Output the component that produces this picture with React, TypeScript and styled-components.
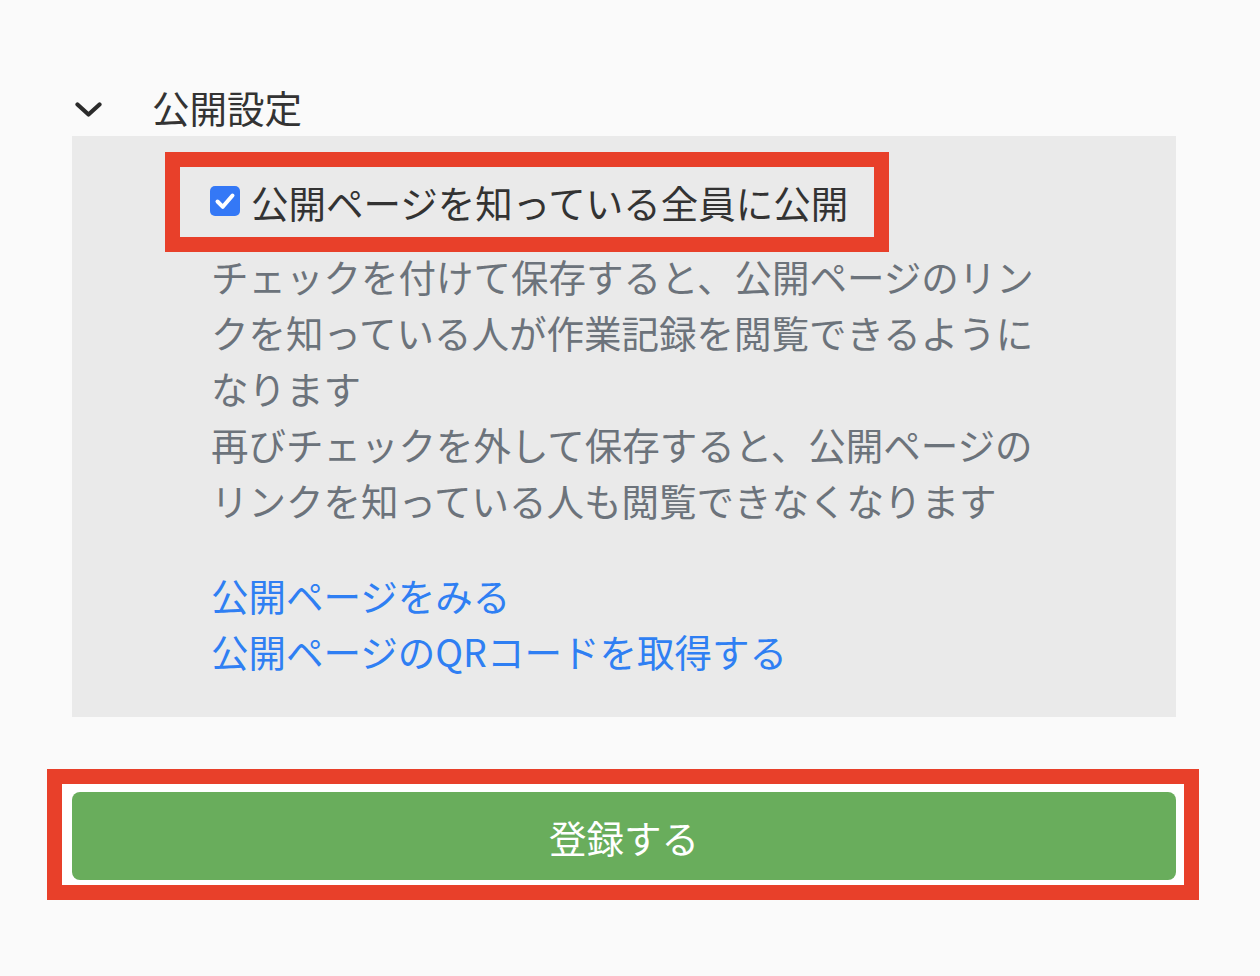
import { useState } from "react";
import styled, { createGlobalStyle } from "styled-components";

const GlobalStyle = createGlobalStyle`
  html, body {
    margin: 0;
    padding: 0;
    background: #fafafa;
  }
  body {
    font-family: "Noto Sans CJK JP", "Noto Sans", sans-serif;
    color: #333333;
  }
`;

const FONT_SIZE = "37.5px";

const App = () => {
  const [isPublic, setIsPublic] = useState(true);

  return (
    <>
      <GlobalStyle />
      <Page>
        <SectionHeader>
          <ChevronIcon viewBox="0 0 27 15" aria-hidden>
            <path
              d="M2.5 2.5 L13.5 12.5 L24.5 2.5"
              fill="none"
              stroke="#2b2b2b"
              strokeWidth="4.2"
              strokeLinecap="round"
              strokeLinejoin="round"
            />
          </ChevronIcon>
          <SectionTitle>公開設定</SectionTitle>
        </SectionHeader>

        <Panel>
          <Highlight>
            <CheckLabel onClick={() => setIsPublic(!isPublic)}>
              <CheckBox $checked={isPublic}>
                {isPublic && (
                  <svg viewBox="0 0 30 30" width="30" height="30" aria-hidden>
                    <path
                      d="M7.5 15.5 L12.8 20.8 L22.5 9.5"
                      fill="none"
                      stroke="#ffffff"
                      strokeWidth="4"
                      strokeLinecap="round"
                      strokeLinejoin="round"
                    />
                  </svg>
                )}
              </CheckBox>
              公開ページを知っている全員に公開
            </CheckLabel>
          </Highlight>

          <Description>
            <p>
              チェックを付けて保存すると、公開ページのリンクを知っている人が作業記録を閲覧できるようになります
            </p>
            <p>
              再びチェックを外して保存すると、公開ページのリンクを知っている人も閲覧できなくなります
            </p>
          </Description>

          <LinkList>
            <TextLink href="#">公開ページをみる</TextLink>
            <TextLink href="#">公開ページのQRコードを取得する</TextLink>
          </LinkList>
        </Panel>

        <ButtonHighlight>
          <SubmitButton type="button">登録する</SubmitButton>
        </ButtonHighlight>
      </Page>
    </>
  );
};

export default App;

const Page = styled.div`
  width: 1104px;
  padding: 82px 0 40px 72px;
  display: flex;
  flex-direction: column;
`;

const SectionHeader = styled.div`
  height: 54px;
  display: flex;
  align-items: center;
`;

const ChevronIcon = styled.svg`
  width: 27px;
  height: 15px;
  margin-left: 3px;
  margin-right: 50px;
  flex-shrink: 0;
`;

const SectionTitle = styled.div`
  font-size: ${FONT_SIZE};
  line-height: 54px;
  margin-top: -4px;
  color: #333333;
`;

const Panel = styled.div`
  background: #eaeaea;
  padding: 16px 0 38px 139px;
  display: flex;
  flex-direction: column;
  align-items: flex-start;
`;

const Highlight = styled.div`
  margin-left: -46px;
  border: 15px solid #e8402a;
  height: 70px;
  padding: 0 26px 0 30px;
  display: flex;
  align-items: center;
`;

const CheckLabel = styled.label`
  display: flex;
  align-items: center;
  gap: 11px;
  font-size: ${FONT_SIZE};
  line-height: 1;
  color: #333333;
  cursor: pointer;
  white-space: nowrap;
`;

const CheckBox = styled.span<{ $checked: boolean }>`
  width: 30px;
  height: 30px;
  border-radius: 5px;
  box-sizing: border-box;
  display: flex;
  align-items: center;
  justify-content: center;
  margin-top: -3px;
  background: ${(props) => (props.$checked ? "#3478f6" : "#ffffff")};
  border: ${(props) => (props.$checked ? "none" : "2px solid #767676")};
`;

const Description = styled.div`
  width: 840px;
  margin-top: -4px;
  font-size: ${FONT_SIZE};
  line-height: 56px;
  color: #6c737b;

  p {
    margin: 0;
  }
`;

const LinkList = styled.div`
  margin-top: 39px;
  display: flex;
  flex-direction: column;
`;

const TextLink = styled.a`
  font-size: ${FONT_SIZE};
  line-height: 56px;
  color: #2f7ff3;
  text-decoration: none;
`;

const ButtonHighlight = styled.div`
  margin: 52px -23px 0 -25px;
  border: 15px solid #e8402a;
  background: #ffffff;
  padding: 8px 8px 5px 10px;
`;

const SubmitButton = styled.button`
  width: 100%;
  height: 88px;
  border: none;
  border-radius: 8px;
  background: #69ad5c;
  color: #ffffff;
  font-family: "Noto Sans CJK JP", "Noto Sans", sans-serif;
  font-size: ${FONT_SIZE};
  cursor: pointer;
`;
